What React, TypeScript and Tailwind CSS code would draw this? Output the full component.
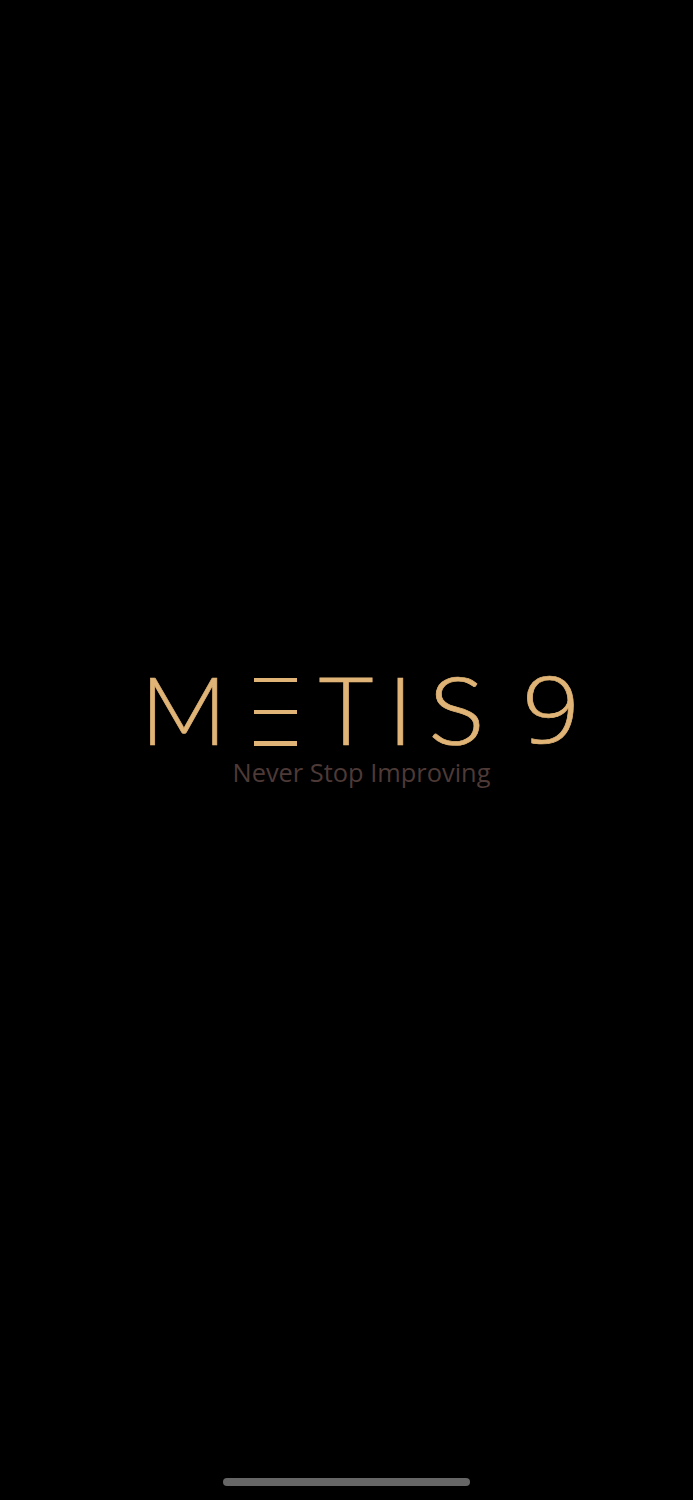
export default function App() {
  const letter = "shrink-0 -translate-y-1 text-[#e0b476] font-light leading-[70px] text-[95px] [-webkit-text-stroke:0.7px_#e0b476]";
  return (
    <div className="flex h-[1500px] flex-col items-center bg-black pl-[30px] [font-family:Lato,'Liberation_Sans',sans-serif]">
      <div className="mt-[676.5px] flex h-[70px] w-[426px] items-center">
        <span className={`${letter} ml-[-8px] w-[113.5px]`}>M</span>
        <div className="flex w-[43px] shrink-0 flex-col gap-[27.5px]">
          <div className="h-[4.5px] bg-[#e0b476]" />
          <div className="h-[4px] bg-[#e0b476]" />
          <div className="h-[4.5px] bg-[#e0b476]" />
        </div>
        <span className={`${letter} ml-[21.5px] w-[69.5px]`}>T</span>
        <span className={`${letter} w-[40px]`}>I</span>
        <span className={`${letter} w-[94px] origin-left scale-x-[1.12]`}>S</span>
        <span className="shrink-0 origin-left -translate-y-[4.5px] scale-x-[1.1] text-[92px] leading-[70px] font-light text-[#e0b476] [-webkit-text-stroke:0.7px_#e0b476] [font-family:'Open_Sans',sans-serif]">9</span>
      </div>
      <div className="mt-[9.5px] text-[25.4px] leading-[32px] text-[#4d3a37] [font-family:'Open_Sans',sans-serif]">
        Never Stop Improving
      </div>
      <div className="mt-auto mb-[14px] ml-[-30px] h-[8px] w-[247px] rounded-full bg-[#666666]" />
    </div>
  );
}
